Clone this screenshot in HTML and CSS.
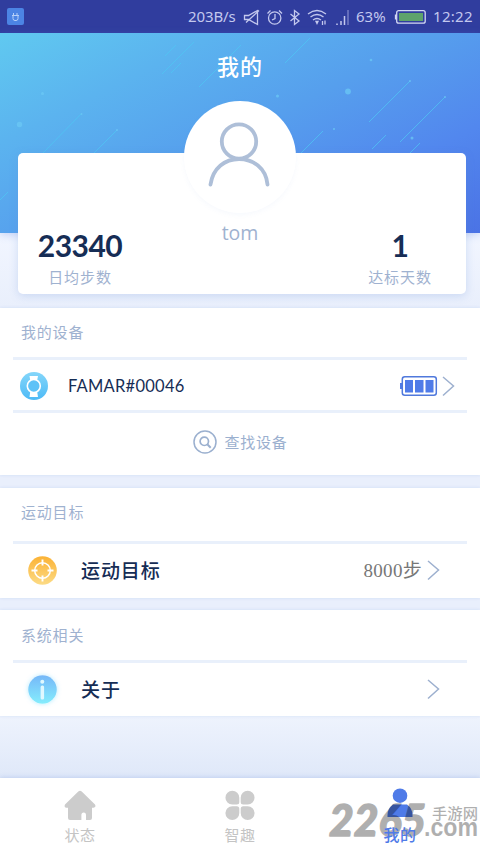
FILE: index.html
```html
<!DOCTYPE html>
<html lang="zh-CN">
<head>
<meta charset="utf-8">
<title>我的</title>
<link rel="stylesheet" href="styles.css">
</head>
<body>
<div class="screen">
  <div class="status">
    <svg class="usb" width="17" height="17" viewBox="0 0 17 17"><rect width="17" height="17" rx="2" fill="#4c84e4"/><path d="M6.500 5v2M10 5v2M5 7.500h7M6 7.500v3q0 2 2 2h1q2 0 2-2v-3" fill="none" stroke="#b7d0f8"/></svg>
    <span class="speed">203B/s</span>
    <svg class="status-icons" width="109" height="20" viewBox="240 6 109 20" fill="none" stroke="#c3c8ee" stroke-width="1.300">
      <path d="M244.500 14.500h4l9-5v14l-9-5h-4zM246 21.500L259 9.500"/>
      <circle cx="274.700" cy="17" r="6.200"/><path d="M275 13v4.500l-3 1.500M267.500 12.500l3-3M282 12.500l-3-3"/>
      <path d="M290.500 13l8.500 7-4.500 3.500V9.500l4.500 3.500-8.500 7"/>
      <path d="M308 13q9-7 18 0M310.500 16q6.500-5 13 0M313 19q4-3 8 0"/><path d="M316 20.500l1 2 1-2zM322.500 24v-4M325 19.500v4"/>
      <path d="M337 24v-1.500M341 24v-4M344.500 24v-9" stroke-width="1.500"/><path d="M348 24v-15" stroke="#747cc4" stroke-width="1.500"/>
    </svg>
    <span class="pct">63%</span>
    <svg class="status-battery" width="31" height="14" viewBox="0 0 31 14"><rect x="1.700" y=".7" width="28.500" height="12.500" rx="2" fill="none" stroke="#d3d8f4" stroke-width="1.300"/><path d="M.6 4.500v5" stroke="#d3d8f4" stroke-width="1.500"/><rect x="4" y="3" width="24" height="8" fill="#5ea36c"/></svg>
    <span class="clock">12:22</span>
  </div>

  <header class="hero">
    <svg class="meteors" width="480" height="200" viewBox="0 33 480 200">
      <g stroke="#4fc5f3" stroke-width="1" stroke-opacity=".75">
        <path d="M165 56l11-11M162 74l32-32M171 73l10-10M199 87l42-42M285 63l25-25M43 153l38-39M94 153l23-23M369 122l41-41M400 142l45-45M301 153l22-22M372 149l14-14M409 154l11-11M0 200l8-8"/>
      </g>
      <g fill="#6bc8f4" fill-opacity=".75"><circle cx="42.500" cy="93.500" r="1.500"/><circle cx="19.500" cy="124.500" r="2.700"/><circle cx="371" cy="60" r="1.300"/><circle cx="348" cy="91.500" r="2.900"/><circle cx="277.500" cy="96" r="1.500"/><circle cx="334" cy="129" r="1.100"/><circle cx="412" cy="138" r="1.500"/><circle cx="81.500" cy="114" r="1"/><circle cx="117" cy="130" r="1"/><circle cx="410" cy="81" r="1"/><circle cx="445" cy="97" r="1"/></g>
    </svg>
    <h1>我的</h1>
  </header>

  <section class="profile">
    <div class="stat"><b>23340</b><span>日均步数</span></div>
    <div class="person">
      <div class="avatar"><svg width="64" height="66" viewBox="208 121 64 66" fill="none" stroke="#aebfd8" stroke-width="3.800" stroke-linecap="round"><circle cx="239" cy="141.500" r="17.200"/><path d="M210.500 184.500C213 168 225 159 239 159s27 9 28.500 25.500"/></svg></div>
      <span class="name">tom</span>
    </div>
    <div class="stat"><b>1</b><span>达标天数</span></div>
  </section>

  <section class="group devices">
    <h2>我的设备</h2>
    <div class="row device">
      <svg width="28" height="28" viewBox="0 0 28 28"><defs><linearGradient id="watch" x2="0" y2="1"><stop stop-color="#84d6fa"/><stop offset="1" stop-color="#4dbaf6"/></linearGradient></defs><circle cx="14" cy="14" r="14" fill="url(#watch)"/><path d="M9.500 4h8.500l-.8 4h-7zM10.200 20h7l.8 5H9.500z" fill="#fff"/><circle cx="13.800" cy="14" r="6.500" fill="#5ec2f7" stroke="#fff" stroke-width="1.600"/></svg>
      <span class="label">FAMAR#00046</span>
      <svg class="charge" width="38" height="20" viewBox="0 0 38 20"><path d="M0 7h2v6H0z" fill="#4f7be8"/><rect x="2.300" y=".8" width="34" height="18.400" rx="2.500" fill="none" stroke="#5079dc" stroke-width="1.500"/><path d="M5 4h8v12.500H5zM15 4h8.500v12.500H15zM25.500 4h8v12.500h-8z" fill="#4f7be8"/></svg>
      <svg class="chevron" width="13" height="20" viewBox="0 0 13 20"><path d="M1 1l10.500 9L1 19.500"/></svg>
    </div>
    <div class="find">
      <svg width="24" height="24" viewBox="0 0 24 24" fill="none" stroke="#9bb0cf"><circle cx="12" cy="12" r="11" stroke-width="1.500"/><circle cx="11.300" cy="11.300" r="4.200" stroke-width="1.700"/><path d="M14.300 14.300l3.400 3.500" stroke-width="2"/></svg>
      <span>查找设备</span>
    </div>
  </section>

  <section class="group goals">
    <h2>运动目标</h2>
    <div class="row option">
      <svg width="29" height="29" viewBox="0 0 29 29"><defs><linearGradient id="aim" x2="0" y2="1"><stop stop-color="#fbb235"/><stop offset="1" stop-color="#fcdb85"/></linearGradient></defs><circle cx="14.500" cy="14.500" r="14.300" fill="url(#aim)"/><circle cx="14.500" cy="14.500" r="7.800" fill="none" stroke="#fff" stroke-width="1.500"/><path d="M14.500 3.500v6M14.500 19.500v6M3.500 14.500h6M19.500 14.500h6" stroke="#fff" stroke-width="1.900"/></svg>
      <span class="label">运动目标</span>
      <span class="value">8000步</span>
      <svg class="chevron" width="13" height="20" viewBox="0 0 13 20"><path d="M1 1l10.500 9L1 19.500"/></svg>
    </div>
  </section>

  <section class="group system">
    <h2>系统相关</h2>
    <div class="row option">
      <svg class="info" width="29" height="29" viewBox="0 0 29 29"><defs><linearGradient id="info" x2="0" y2="1"><stop stop-color="#75b7f8"/><stop offset="1" stop-color="#85edfd"/></linearGradient></defs><circle cx="14.500" cy="14.500" r="14.300" fill="url(#info)"/><g fill="#e0f8ff"><circle cx="14.300" cy="6.800" r="2"/><rect x="12.600" y="10.500" width="3.500" height="14" rx="1.500"/></g></svg>
      <span class="label">关于</span>
      <svg class="chevron" width="13" height="20" viewBox="0 0 13 20"><path d="M1 1l10.500 9L1 19.500"/></svg>
    </div>
  </section>

  <nav class="tabs">
    <div class="tab"><svg width="32" height="32" viewBox="0 0 32 32"><path d="M14.300 2.600q1.700-1.500 3.400 0L31 15.500q1.500 2.500-1.500 3.300H28V29q0 2-2 2h-4v-5q0-2.600-2.300-2.600T17.400 26v5H6q-2 0-2-2V18.800H2q-2.200-.8-1-3.300z" fill="#ccc"/></svg><span>状态</span></div>
    <div class="tab"><svg width="32" height="32" viewBox="0 0 32 32" fill="#ccc"><path d="M8.300 1.800a7 7 0 0 1 7 7V13q0 2.500-2.500 2.500H8.300a6.850 6.850 0 0 1 0-13.700zM23.700 1.800a7 7 0 0 0-7 7V13q0 2.500 2.500 2.500h4.500a6.850 6.850 0 0 0 0-13.700zM8.300 31a7 7 0 0 0 7-7v-4.300q0-2.500-2.500-2.500H8.300a6.850 6.850 0 0 0 0 13.800zM23.700 31a7 7 0 0 1-7-7v-4.300q0-2.500 2.500-2.500h4.500a6.850 6.850 0 0 1 0 13.800z"/></svg><span>智趣</span></div>
    <div class="tab active"><svg width="32" height="32" viewBox="0 0 32 32" fill="#4f7be8"><circle cx="16" cy="6.700" r="7.300"/><path d="M3.500 28v-2q0-6.500 5.500-10.500h14q5.500 4 5.500 10.500v2z"/></svg><span>我的</span></div>
  </nav>

  <div class="watermark">
    <svg width="152" height="46" viewBox="328 799 152 46">
      <text class="mark-number" x="329" y="836" textLength="97" lengthAdjust="spacingAndGlyphs">2265</text>
      <text class="mark-site" x="432" y="819" textLength="46" lengthAdjust="spacingAndGlyphs">手游网</text>
      <text class="mark-domain" x="424" y="836" textLength="54" lengthAdjust="spacingAndGlyphs">.com</text>
    </svg>
  </div>
</div>
</body>
</html>
```
FILE: styles.css
```css
* { box-sizing: border-box; }
body {
  margin: 0;
  font-family: Lato, "Noto Sans CJK SC", sans-serif;
  color: #162d55;
}
svg { display: block; flex: none; overflow: visible; }
h1, h2 { margin: 0; font-weight: 400; }

.screen {
  position: relative;
  width: 480px;
  height: 853px;
  display: flex;
  flex-direction: column;
  overflow: hidden;
  background: linear-gradient(#f2f6ff 27%, #e9effc 36%, #e9effc 83%, #eef3fd 84%, #dfe8f9 91.2%);
}

.status {
  height: 33px;
  flex: none;
  display: flex;
  align-items: center;
  padding: 0 7px;
  background: #303d9e;
  color: #c3c8ee;
  font: 15px/33px "Noto Sans", sans-serif;
  white-space: nowrap;
}
.speed { margin-left: auto; width: 49px; letter-spacing: -.1px; }
.status-icons { margin-left: 3px; }
.pct { width: 32px; margin-left: 7px; font-size: 15px; }
.status-battery { margin-left: 7px; }
.clock { width: 40px; margin-left: 7px; letter-spacing: .3px; }

.hero {
  height: 200px;
  flex: none;
  background: linear-gradient(153deg, #60c9f0 0%, #5bb3ef 25%, #569fed 50%, #5287ee 76%, #4b73e5 100%);
  box-shadow: 0 2px 8px rgba(90, 130, 225, .3);
}
.meteors { margin-bottom: -200px; }
h1 {
  position: relative;
  padding-top: 18px;
  text-align: center;
  font-size: 22px;
  line-height: 32px;
  font-weight: 500;
  letter-spacing: 1px;
  color: #fff;
}

.profile {
  position: relative;
  flex: none;
  display: grid;
  grid-template-columns: 124px 1fr 132px;
  height: 141px;
  margin: -80px 14px 14px 18px;
  border-radius: 5px;
  background: #fff;
  box-shadow: 0 2px 8px rgba(105, 145, 215, .25);
}
.stat {
  display: flex;
  flex-direction: column;
  align-items: center;
  padding-top: 74px;
}
.stat b { font-size: 30px; line-height: 36px; letter-spacing: -.5px; }
.stat span {
  margin-top: 3px;
  font-size: 15px;
  line-height: 22px;
  letter-spacing: .9px;
  color: #9fb2d0;
}
.person {
  display: flex;
  flex-direction: column;
  align-items: center;
  margin: -52px 0 0 4px;
}
.avatar {
  width: 112px;
  height: 112px;
  padding: 20px 0 0 24px;
  border-radius: 50%;
  background: #fff;
  box-shadow: 0 2px 5px rgba(120, 160, 225, .06);
}
.name {
  margin-top: 7px;
  font: 19.500px/26px "Open Sans", sans-serif;
  color: #9fb2d0;
}

.group {
  flex: none;
  background: #fff;
  box-shadow: 0 0 3px rgba(120, 155, 225, .22);
}
h2 {
  padding-left: 21px;
  font-size: 15px;
  letter-spacing: .8px;
  color: #9fb2d0;
}
.row {
  display: flex;
  align-items: center;
  margin: 0 13px;
  border-top: 3px solid #e9f0fb;
}
.chevron { fill: none; stroke: #9db0cf; stroke-width: 1.5; }

.devices { height: 167px; margin-bottom: 13px; }
.devices h2 { height: 49px; line-height: 48px; }
.device {
  height: 56px;
  padding: 2px 12px 0 7px;
  border-bottom: 3px solid #e9f0fb;
}
.device .label { margin: 0 auto 0 20px; font-size: 16.500px; line-height: 24px; letter-spacing: .25px; }
.device .chevron { margin-left: 4px; }
.find {
  display: flex;
  align-items: center;
  justify-content: center;
  gap: 8px;
  height: 58px;
  font-size: 15px;
  letter-spacing: .7px;
  color: #9bb0cf;
}
.find span { margin-top: -2px; }

.goals { height: 110px; margin-bottom: 12px; }
.goals h2 { height: 53px; line-height: 49px; }
.goals .row { height: 57px; padding-bottom: 2px; }
.system { height: 106px; }
.system h2 { height: 50px; line-height: 50px; }
.system .row { height: 56px; padding-bottom: 1px; }
.option { padding: 0 27px 0 15px; }
.option .label {
  margin: 2px auto 0 24px;
  font-size: 19px;
  line-height: 28px;
  font-weight: 500;
  letter-spacing: .9px;
}
.value {
  margin: 2px 5px 0 0;
  font: 19px/28px "Liberation Serif", "Noto Sans CJK SC", serif;
  letter-spacing: .3px;
  color: #777;
}
.info { border-radius: 50%; box-shadow: 0 0 4px rgba(120, 220, 255, .5); }

.tabs {
  flex: none;
  display: grid;
  grid-template-columns: repeat(3, 1fr);
  height: 75px;
  margin-top: auto;
  background: #fff;
  box-shadow: 0 -1px 4px rgba(110, 145, 215, .25);
}
.tab {
  display: flex;
  flex-direction: column;
  align-items: center;
  padding-top: 11px;
  font-size: 15px;
  line-height: 22px;
  color: #c4c4c4;
}
.tab span { margin-top: 3px; letter-spacing: .5px; }
.active { color: #4f7be8; }
.active span { position: relative; z-index: 2; font-size: 16px; font-weight: 500; }

.watermark { position: absolute; z-index: 1; left: 328px; top: 799px; opacity: .31; }
.mark-number { font: italic 900 44px Lato, sans-serif; stroke: #162d55; stroke-width: 1.5px; stroke-linejoin: round; }
.watermark text { fill: #000; stroke-opacity: 1; }
.watermark .mark-number { stroke: #000; }
.mark-site { font: 500 15px "Noto Sans CJK SC", sans-serif; }
.mark-domain { font: 700 25px "Liberation Sans", sans-serif; }
```
